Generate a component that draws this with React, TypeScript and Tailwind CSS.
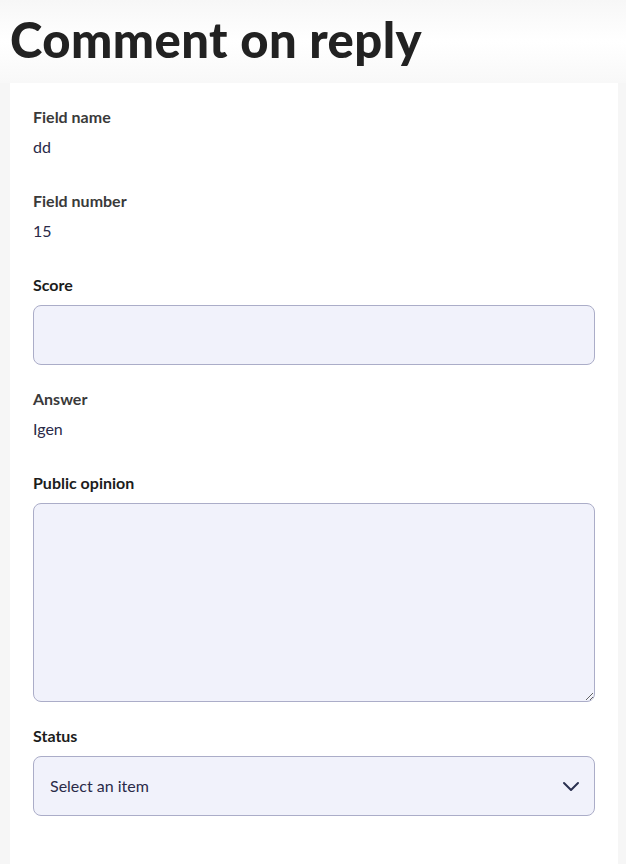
import React from "react";

const ReadField = ({ label, value }: { label: string; value: string }) => (
  <div className="mb-[30px]">
    <div className="text-[16px] leading-6 font-bold text-[#3a3a3a]">{label}</div>
    <div className="mt-[6px] text-[16px] leading-6 text-[#2a2a48]">{value}</div>
  </div>
);

const App = () => {
  return (
    <div className="min-h-[864px] bg-[#f6f6f6] font-['Lato',sans-serif]">
      <div className="px-[10px] pt-[9px] pb-[14px] bg-gradient-to-b from-[#f7f7f7] via-white to-[#f8f8f8]">
        <h1 className="text-[49px] leading-[60px] font-black text-[#222222] tracking-[0.45px]">Comment on reply</h1>
      </div>
      <div className="ml-[10px] mr-[8px] min-h-[781px] bg-white px-[23px] pt-[22px] pb-8">
        <ReadField label="Field name" value="dd" />
        <ReadField label="Field number" value="15" />

        <div className="mb-[22px]">
          <label className="block text-[16px] leading-6 font-bold text-[#1c1c1c]">Score</label>
          <input
            type="text"
            className="mt-2 block w-full h-[60px] rounded-lg border border-[#abadc8] bg-[#f1f2fb] px-4 outline-none"
          />
        </div>

        <ReadField label="Answer" value="Igen" />

        <div className="mb-[22px]">
          <label className="block text-[16px] leading-6 font-bold text-[#1c1c1c]">Public opinion</label>
          <textarea className="mt-2 block w-full h-[199px] rounded-lg border border-[#abadc8] bg-[#f1f2fb] px-4 py-3 outline-none" />
        </div>

        <div>
          <label className="block text-[16px] leading-6 font-bold text-[#1c1c1c]">Status</label>
          <div className="mt-2 flex h-[60px] items-center justify-between rounded-lg border border-[#abadc8] bg-[#f1f2fb] pl-4 pr-[13px]">
            <span className="text-[16px] text-[#2a2a48]">Select an item</span>
            <svg width="20" height="20" viewBox="0 0 20 20" fill="none" stroke="#2b3150" strokeWidth="2" strokeLinecap="round" strokeLinejoin="round">
              <path d="M3 7l7 7 7-7" />
            </svg>
          </div>
        </div>
      </div>
    </div>
  );
};

export default App;
